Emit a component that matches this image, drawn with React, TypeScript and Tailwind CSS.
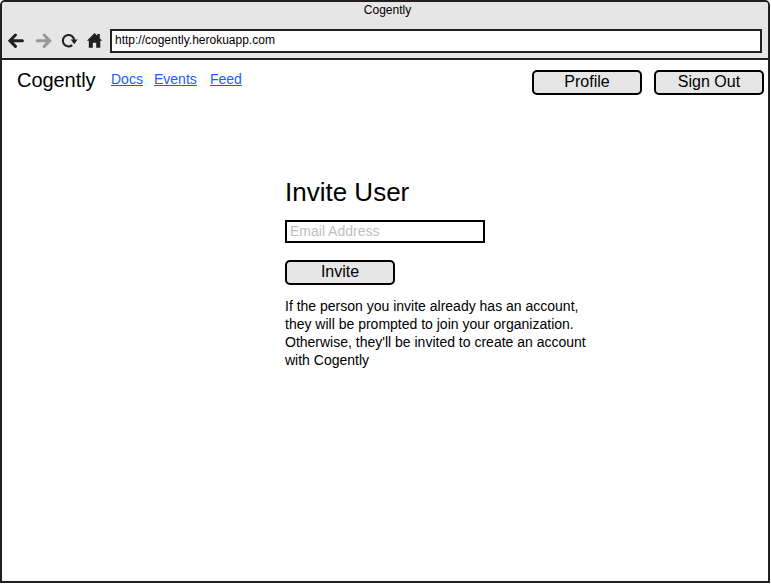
import type { ReactNode } from "react";

function Button({ children }: { children: ReactNode }) {
  return (
    <button className="h-[25px] w-[110px] rounded-[5px] border-2 border-black bg-[#e6e6e6] pb-[2px] text-center text-[16px] leading-[19px] text-black">
      {children}
    </button>
  );
}

function Toolbar() {
  return (
    <div className="flex h-[24px] items-center pr-[6px]">
      <svg width="108" height="24" viewBox="2 29 108 24" fill="none" className="shrink-0">
        <g strokeWidth="3" strokeLinecap="round" strokeLinejoin="miter">
          <path d="M22.4 40.7H11M15.5 35L9.9 40.7L15.5 46.4" stroke="#231f20" />
          <path d="M37.2 40.7H48.6M44.1 35L49.7 40.7L44.1 46.4" stroke="#999999" />
        </g>
        <path d="M72.2 45.1A5.7 5.7 0 1 1 74.2 40" stroke="#231f20" strokeWidth="2.1" />
        <path d="M70.7 39.4H77.6L74.2 44.3Z" fill="#231f20" />
        <path
          d="M94.5 33L97.3 35.8V34.1H99.8V38.3L102.1 40.7H100.3V47.8H96.2V42.7H92.8V47.8H88.8V40.7H86.9Z"
          fill="#231f20"
        />
      </svg>
      <div className="h-[24px] flex-1 border-2 border-[#231f20] bg-white pl-[3px] text-[12px] leading-[19px]">
        http://cogently.herokuapp.com
      </div>
    </div>
  );
}

export default function App() {
  return (
    <div className="h-[584px] w-[771px] overflow-hidden bg-white font-['Liberation_Sans',Arial,sans-serif] text-black">
      <div className="h-[583px] w-[770px] overflow-hidden rounded-t-[5px] border-2 border-[#231f20] bg-white">
        <header className="h-[58px] border-b-2 border-[#231f20] bg-[#e6e6e6]">
          <div className="h-[27px] pl-[5px] text-center text-[12px] leading-[16px]">Cogently</div>
          <Toolbar />
        </header>
        <nav className="flex h-[35px] items-start justify-between pt-[10px] pr-[4px] pl-[15px]">
          <div className="flex items-start">
            <span className="w-[94px] text-[20px] leading-[20px] tracking-[-0.05px]">Cogently</span>
            <div className="flex text-[14px] leading-[18px] text-[#1a5cff] underline">
              <a className="w-[43px]">Docs</a>
              <a className="w-[56px]">Events</a>
              <a>Feed</a>
            </div>
          </div>
          <div className="flex gap-[12px]">
            <Button>Profile</Button>
            <Button>Sign Out</Button>
          </div>
        </nav>
        <main className="ml-[283px] w-[320px] pt-[82px]">
          <h1 className="h-[43px] text-[26px] leading-[30px]">Invite User</h1>
          <input
            placeholder="Email Address"
            className="block h-[23px] w-[200px] border-2 border-black bg-white pr-1 pb-[1px] pl-[3px] text-[14px] leading-[18px] outline-none placeholder:text-[#c0c0c0]"
          />
          <div className="flex pt-[17px]">
            <Button>Invite</Button>
          </div>
          <p className="pt-[12px] text-[14px] leading-[18px]">
            If the person you invite already has an account,
            <br />
            they will be prompted to join your organization.
            <br />
            Otherwise, they'll be invited to create an account
            <br />
            with Cogently
          </p>
        </main>
      </div>
    </div>
  );
}
